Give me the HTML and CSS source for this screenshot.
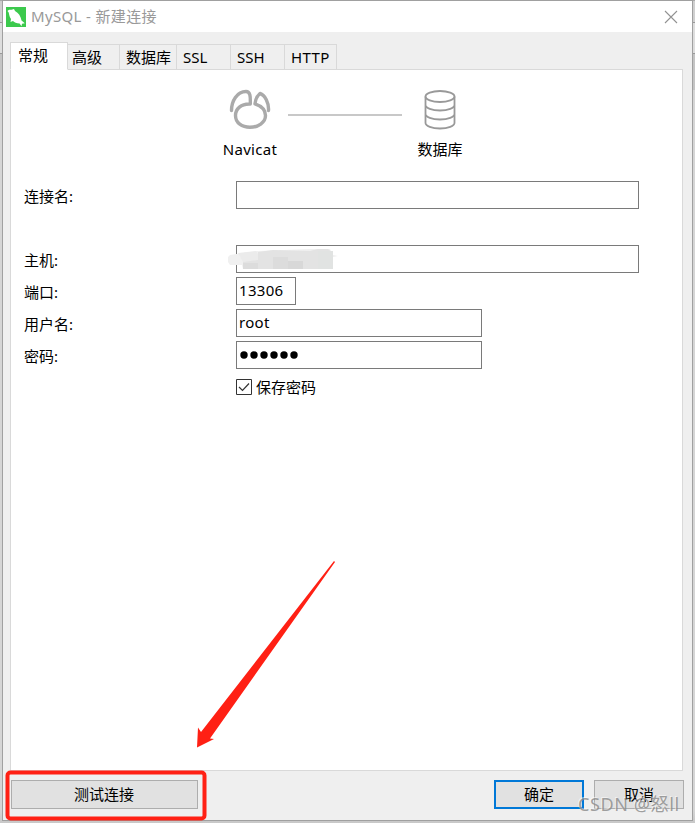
FILE: index.html
```html
<!DOCTYPE html>
<html lang="zh-CN">
<head>
<meta charset="utf-8">
<title>MySQL - 新建连接</title>
<link rel="stylesheet" href="styles.css">
</head>
<body>
<main class="window">
  <header class="titlebar">
    <svg class="logo" width="20" height="20" viewBox="0 0 20 20"><rect width="20" height="20" fill="#3cc94d"/><path fill="#fff" d="M1.500 4C2.500 2.500 4 2.500 5.500 2.800L8 2L9 4C12.500 6 14.800 9 15.500 13.500L18.800 16.300L16 16.800L15.500 19.200L13.600 16.500C10.500 16.500 8.500 15.500 7 14L4.500 15L5 12C3.200 9.800 3.200 7.300 2.700 5.500Z"/></svg>
    <h1 class="title">MySQL - 新建连接</h1>
    <svg class="close" width="14" height="14" viewBox="0 0 14 14"><path d="M1 1L13 13M13 1L1 13" stroke="#929292" stroke-width="1.1"/></svg>
  </header>
  <nav class="tabs">
    <span class="tab active">常规</span><span class="tab advanced">高级</span><span class="tab database">数据库</span><span class="tab ssl">SSL</span><span class="tab ssh">SSH</span><span class="tab http">HTTP</span>
  </nav>
  <section class="panel">
    <div class="diagram">
      <div class="node"><svg width="42" height="42" viewBox="0 0 42 42" fill="none" stroke="#aaa" stroke-width="3.4" stroke-linecap="round" stroke-linejoin="round"><path d="M2.500 21.500C2.500 12 8 2.500 17 2.500C21.500 2.500 21.500 8 21.300 15C12 14.500 6.500 20 6.500 26.500C6.500 34 13 38.300 21 38.300C29 38.300 36.500 33.500 36.500 26.500C36.500 20 31 16.500 26 14.800C26.500 10 28 7 31 4.500C36 6 40 14 39.500 21.500"/></svg><span class="latin">Navicat</span></div>
      <div class="link"></div>
      <div class="node"><svg width="42" height="42" viewBox="0 0 42 42" fill="none" stroke="#999" stroke-width="1.8"><ellipse cx="21" cy="7.500" rx="14.500" ry="5.500"/><path d="M6.500 7.500V34C6.500 37 13 39.500 21 39.500S35.500 37 35.500 34V7.500M6.500 16C6.500 19 13 21.500 21 21.500S35.500 19 35.500 16M6.500 25C6.500 28 13 30.500 21 30.500S35.500 28 35.500 25"/></svg><span>数据库</span></div>
    </div>
    <div class="form">
      <label>连接名:</label><div class="field"></div>
      <label>主机:</label><div class="field host"><svg class="mask" width="110" height="24" viewBox="0 0 110 24"><path fill="#f0f0f0" d="M2 6L15 4L29 2L82 0H102L105 6L110 7L105 8V20H15L14 16H2L0 13V8Z"/><path fill="#e3e3e3" d="M15 11L30 10V3L45 1L82 2L90 0H100L105 4V20H15Z"/><path fill="#ebebeb" d="M10 4L28 2L30 5V11L15 13Z"/><path fill="#dcdcdc" d="M15 14H30V20H15ZM45 8H60V20H45Z"/><path fill="#d8d8d8" d="M60 12H75V20H60Z"/><path fill="#e1e3e2" d="M90 2H105V20H90Z"/></svg></div>
      <label>端口:</label><div class="field port latin">13306</div>
      <label>用户名:</label><div class="field short latin">root</div>
      <label>密码:</label><div class="field short password"><svg width="62" height="10" viewBox="0 0 62 10"><g fill="#000"><circle cx="5" cy="5" r="3.700"/><circle cx="15" cy="5" r="3.700"/><circle cx="25" cy="5" r="3.700"/><circle cx="35" cy="5" r="3.700"/><circle cx="45" cy="5" r="3.700"/><circle cx="55" cy="5" r="3.700"/></g></svg></div>
      <div class="remember"><svg width="16" height="16" viewBox="0 0 16 16"><path fill="none" stroke="#333" d="M.5.5H15.500V15.500H.5Z"/><path fill="none" stroke="#333" stroke-width="1.200" d="M3 8L6.500 11.500L13 4.500"/></svg><span>保存密码</span></div>
    </div>
  </section>
  <footer class="actions">
    <span class="button test">测试连接</span><span class="button ok">确定</span><span class="button cancel">取消</span>
  </footer>
</main>
<svg class="annotation" width="695" height="823" viewBox="0 0 695 823"><rect x="7.500" y="772.500" width="197" height="46" rx="3" fill="none" stroke="#ff2014" stroke-width="4"/><path fill="#ff2014" d="M334 561L335 562L210 738.500L214 739L197 747.500L198 727.500L201 732Z"/></svg>
<span class="watermark">CSDN @怒ll</span>
</body>
</html>
```
FILE: styles.css
```css
* { box-sizing: border-box; }
body {
  margin: 0;
  width: 695px;
  height: 823px;
  overflow: hidden;
  padding: 0 2px;
  background: linear-gradient(#aaa 0 1px, #d0d0d0 1px 22px, #999 22px 23px, #ddd 23px 53px, #999 53px 54px, #c4c4c4 54px 90px, #d5d5d5 90px 810px, #c8c8c8);
  font: 15px/20px "Noto Sans", "Noto Sans CJK SC", sans-serif;
  color: #000;
}
.window {
  width: 691px;
  height: 821px;
  border: 1px solid #a0a0a0;
  background: #efefef;
  display: flex;
  flex-direction: column;
}
.titlebar {
  height: 31px;
  flex: none;
  display: flex;
  align-items: center;
  padding: 0 14px 0 3px;
  background: #fff;
  color: #999;
}
.title { margin: 0 0 2px 5px; font-size: 15px; font-weight: 400; line-height: 20px; letter-spacing: .35px; }
.close { margin-left: auto; }
.latin { letter-spacing: .3px; }
.tabs {
  display: flex;
  align-items: flex-end;
  height: 38px;
  margin: 0 9px -1px 7px;
  flex: none;
  position: relative;
}
.tab {
  height: 26px;
  border: 1px solid #d9d9d9;
  border-left: 0;
  padding-left: 6px;
  line-height: 25px;
  white-space: nowrap;
}
.tab.active { width: 58px; height: 28px; padding-left: 7px; background: #fff; border-left: 1px solid #d9d9d9; border-bottom-color: #fff; line-height: 25px; }
.tab.advanced { width: 52px; padding-left: 4px; }
.tab.database { width: 57px; }
.tab.ssl { width: 54px; }
.tab.ssh { width: 54px; }
.tab.http { width: 52px; letter-spacing: .4px; }
.panel {
  width: 673px;
  height: 702px;
  margin-left: 7px;
  flex: none;
  border: 1px solid #d9d9d9;
  background: #fff;
}
.diagram { display: flex; height: 111px; padding: 19px 0 0 209px; }
.node { width: 60px; display: flex; flex-direction: column; align-items: center; }
.node span { margin-top: 8px; }
.link { width: 114px; height: 2px; margin: 25px 8px 0 8px; background: #c8c8c8; }
.form {
  display: grid;
  grid-template-columns: 212px 403px;
  grid-template-rows: 64px;
  grid-auto-rows: 32px;
  align-items: start;
  padding-left: 13px;
}
.form label { padding-top: 5px; }
.field { height: 28px; border: 1px solid #7a7a7a; padding: 0 0 2px 2px; display: flex; align-items: center; }
.password { padding-bottom: 0; }
.host { position: relative; }
.mask { position: absolute; left: -9px; top: 3px; }
.port { width: 60px; }
.short { width: 246px; }
.remember { grid-column: 2; display: flex; align-items: center; gap: 4px; height: 28px; }
.actions { display: flex; padding: 9px 8px 0; }
.button { display: flex; height: 29px; align-items: center; justify-content: center; border: 1px solid #adadad; background: #e1e1e1; padding-bottom: 2px; }
.test { width: 187px; padding-right: 1px; }
.ok { width: 90px; margin-left: 296px; border: 2px solid #0078d7; }
.cancel { width: 90px; margin-left: 10px; }
.annotation { position: absolute; left: 0; top: 0; pointer-events: none; }
.watermark { position: absolute; left: 578px; top: 792px; font-size: 18px; line-height: 24px; letter-spacing: .6px; color: #888c; text-shadow: -1px -1px 0 #fff8; white-space: nowrap; }
```
